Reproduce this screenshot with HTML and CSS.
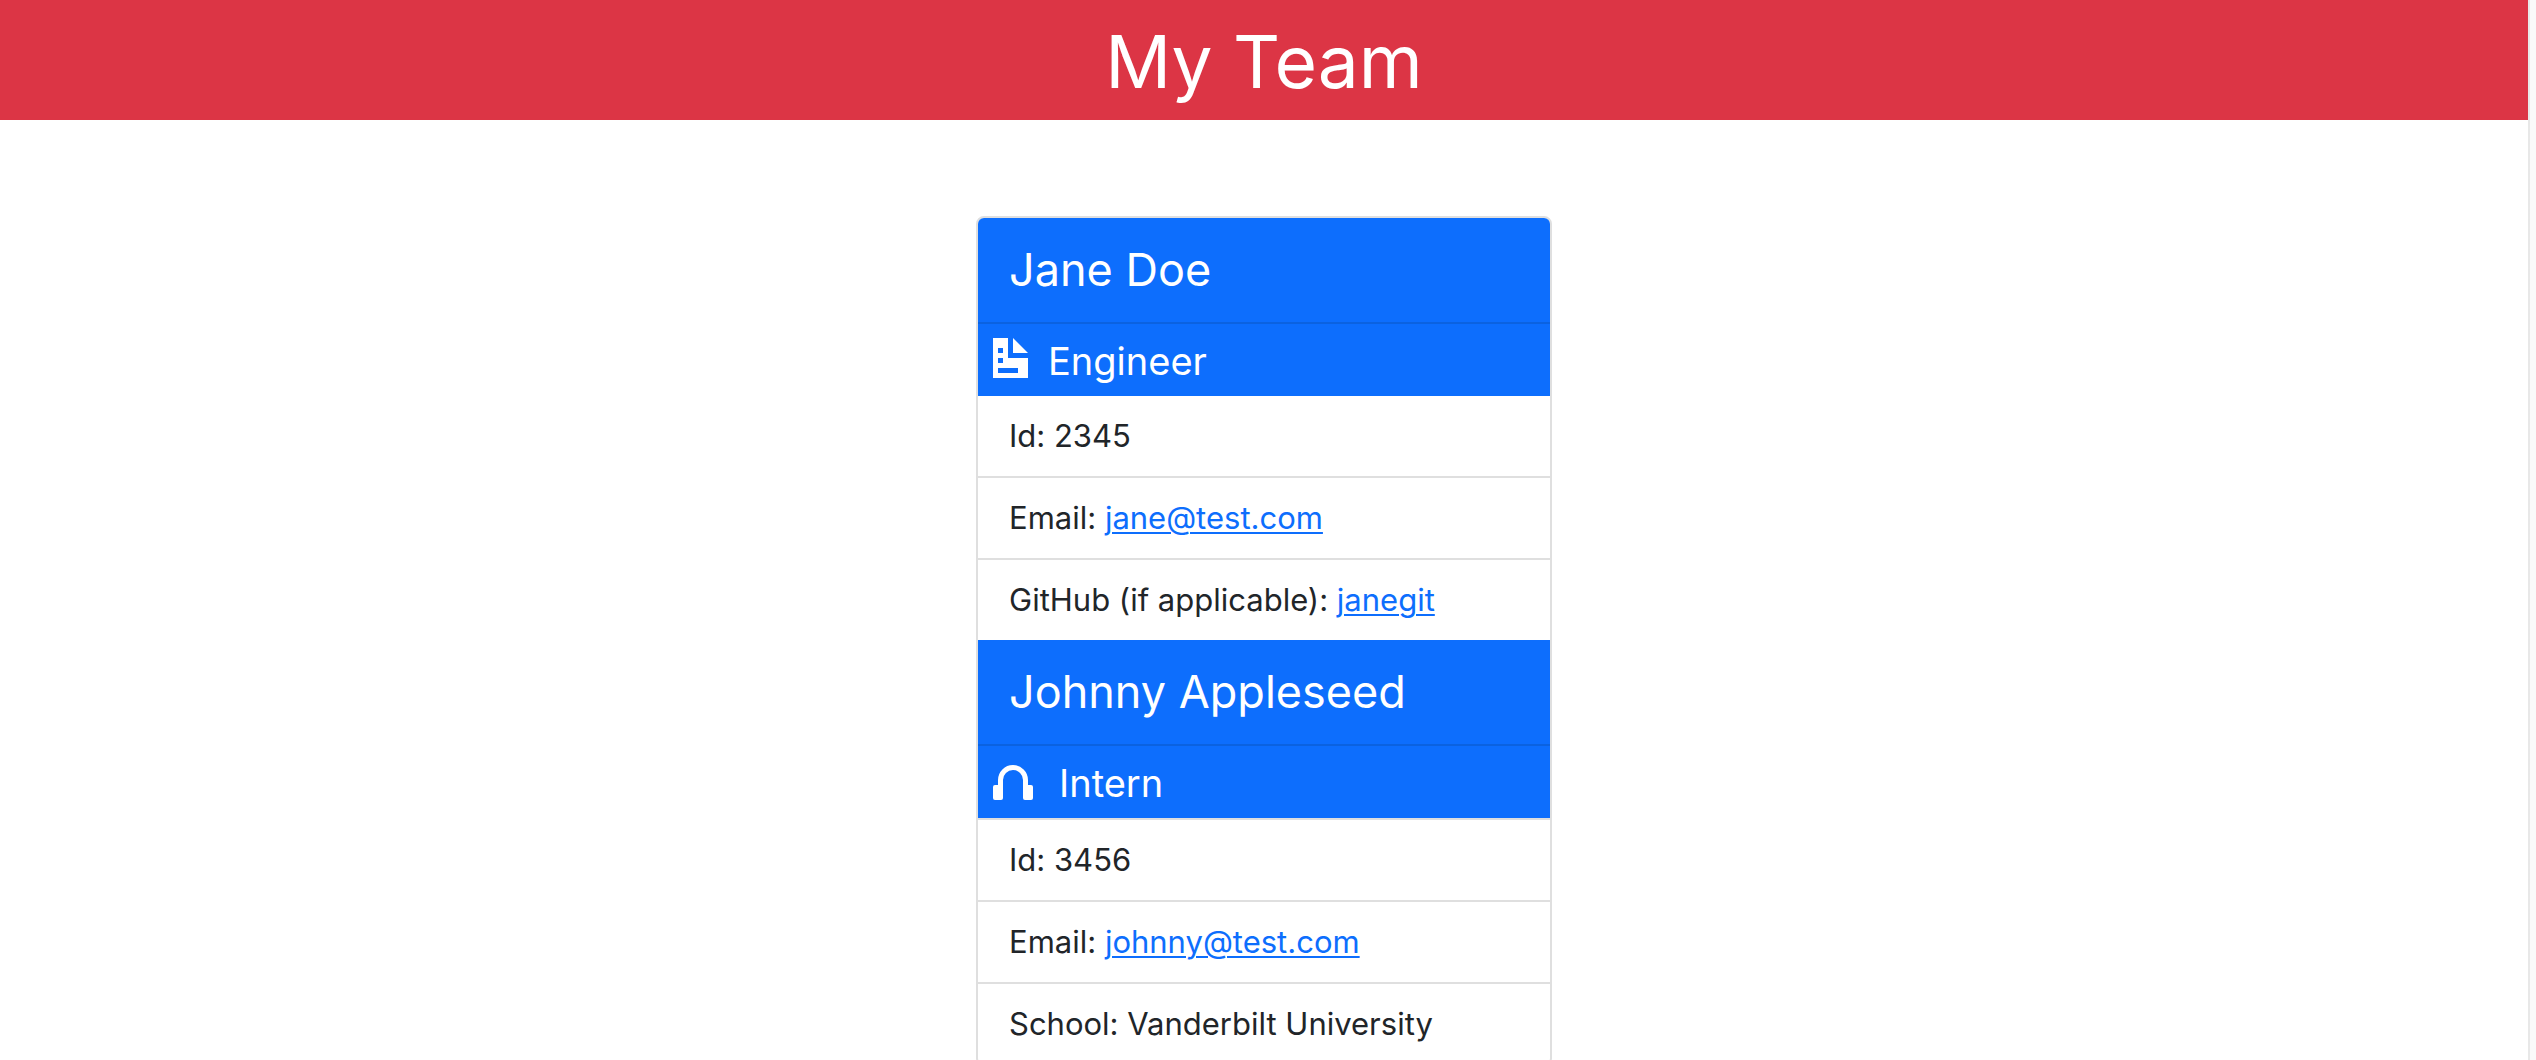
FILE: index.html
```html
<!DOCTYPE html>
<html lang="en">
<head>
<meta charset="utf-8">
<meta name="viewport" content="width=device-width, initial-scale=1">
<title>My Team</title>
<link rel="stylesheet" href="styles.css">
</head>
<body>
<div class="page">
  <header class="banner"><h1 class="banner-title">My Team</h1></header>
  <main class="team">
    <div class="card">
      <section class="member">
        <h2 class="member-name">Jane Doe</h2>
        <h3 class="member-role">
          <svg class="icon icon-doc" viewBox="0 0 14 16" aria-hidden="true"><path fill="currentColor" fill-rule="evenodd" d="M0 0h6v8h8v8H0zM2 4v2h2V4zM2 8v2h2V8zM2 12v2h8v-2z"/><path fill="currentColor" d="M8 0l6 6H8z"/></svg>
          Engineer
        </h3>
        <ul class="details">
          <li class="detail">Id: 2345</li>
          <li class="detail">Email: <a class="link" href="mailto:jane@test.com">jane@test.com</a></li>
          <li class="detail">GitHub (if applicable): <a class="link" href="https://github.com/janegit">janegit</a></li>
        </ul>
      </section>
      <section class="member">
        <h2 class="member-name">Johnny Appleseed</h2>
        <h3 class="member-role">
          <svg class="icon icon-phones" viewBox="0 0 46 40" aria-hidden="true"><path fill="none" stroke="currentColor" stroke-width="5" d="M7.500 27V20a12.500 12.500 0 0 1 25 0V27"/><rect x="0" y="25" width="10" height="15" rx="2" fill="currentColor"/><rect x="30" y="25" width="10" height="15" rx="2" fill="currentColor"/></svg>
          Intern
        </h3>
        <ul class="details details-ruled">
          <li class="detail">Id: 3456</li>
          <li class="detail">Email: <a class="link" href="mailto:johnny@test.com">johnny@test.com</a></li>
          <li class="detail">School: Vanderbilt University</li>
        </ul>
      </section>
    </div>
  </main>
</div>
<div class="scroll-track"></div>
</body>
</html>
```
FILE: styles.css
```css
* { box-sizing: border-box; }

body {
  display: flex;
  height: 100vh;
  margin: 0;
  overflow: hidden;
  background: #fff;
  color: #212529;
  font-family: Inter, "Liberation Sans", sans-serif;
  font-size: 31px;
  line-height: 48px;
}

h1, h2, h3, ul { margin: 0; padding: 0; }
h1, h2, h3 { font-weight: 400; }

.page { flex: 1; overflow: hidden; }

.scroll-track {
  width: 8px;
  background: #fafafa;
  border-left: 2px solid #e8e8e8;
}

.banner {
  background: #dc3545;
  color: #fff;
  text-align: center;
}

.banner-title {
  padding-top: 4px;
  font-size: 73px;
  line-height: 116px;
}

.team {
  display: flex;
  justify-content: center;
  padding: 96px 32px;
}

.card {
  width: 576px;
  border: 2px solid #dfdfdf;
  border-radius: 8px;
  overflow: hidden;
}

.member-name {
  padding: 16px 31px;
  background: #0d6efd;
  border-bottom: 2px solid #0b62e0;
  color: #fff;
  font-size: 45px;
  line-height: 72px;
}

.member-role {
  display: flex;
  align-items: flex-start;
  gap: 20px;
  padding: 14px 15px 12px;
  background: #0d6efd;
  color: #fff;
  font-size: 38px;
  line-height: 46px;
}

.icon { flex: none; height: 40px; }
.icon-doc { width: 35px; }
.icon-phones { width: 46px; }

.details { list-style: none; }
.details-ruled { border-top: 2px solid #dfdfdf; }

.detail { padding: 16px 31px; }
.detail + .detail { border-top: 2px solid #dfdfdf; }

.link {
  color: #0d6efd;
  text-decoration-thickness: 2px;
  text-underline-offset: 3px;
}
```
